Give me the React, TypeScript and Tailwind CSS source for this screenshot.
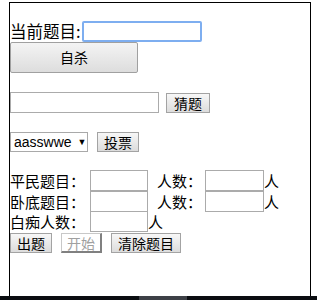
const cjk = { fontFamily: '"SimSun", "Noto Sans CJK SC", sans-serif' };

function Btn({ label, w, disabled }: { label: string; w: string; disabled?: boolean }) {
  return (
    <button
      disabled={disabled}
      className={`${w} h-[20px] border text-[14px] leading-none flex items-center justify-center ${
        disabled
          ? 'bg-white text-[#a0a0a0] border-[#c8c8c8] border-r-[#808080] border-b-[#808080] border-r-2 border-b-2'
          : 'bg-gradient-to-b from-[#f7f7f7] to-[#dcdcdc] text-black border-[#a3a3a3]'
      }`}
      style={cjk}
    >
      {label}
    </button>
  );
}

function Field({ w }: { w: string }) {
  return <input className={`${w} h-[21px] border border-[#ababab] bg-white outline-none`} />;
}

export default function App() {
  return (
    <div className="w-[317px] h-[300px] flex flex-col bg-white overflow-hidden">
      <div className="ml-[9px] mt-[2px] w-[302px] flex-1 border-l border-t border-r border-black text-black" style={cjk}>
        <div className="mt-[18px] flex items-center h-[21px]">
          <span className="w-[72px] text-[16.5px] leading-none whitespace-nowrap">当前题目:</span>
          <input className="w-[120px] h-[21px] border-2 border-[#7eaef0] rounded-[2px] outline-none" />
        </div>
        <button className="w-[128px] h-[31px] border border-[#a0a0a0] bg-gradient-to-b from-[#f4f4f4] to-[#dddddd] text-[14px] rounded-[2px]" style={cjk}>
          自杀
        </button>

        <div className="mt-[19px] flex items-center h-[21px] gap-[7px]">
          <Field w="w-[149px]" />
          <Btn label="猜题" w="w-[44px]" />
        </div>

        <div className="mt-[19px] flex items-center h-[20px] gap-[9px]">
          <div className="w-[78px] h-[20px] border border-[#a9a9a9] flex items-center pl-[3px] text-[14px] leading-none" style={{ fontFamily: '"Liberation Sans", sans-serif' }}>
            <span>aasswwe</span>
            <span className="ml-[6px] text-[9px]">▼</span>
          </div>
          <Btn label="投票" w="w-[42px]" />
        </div>

        <div className="mt-[18px] flex flex-col text-[15px] leading-none">
          <div className="flex items-center h-[21px]">
            <span className="w-[80px] whitespace-nowrap">平民题目：</span>
            <Field w="w-[58px]" />
            <span className="ml-[9px] w-[48px] whitespace-nowrap">人数：</span>
            <Field w="w-[59px]" />
            <span>人</span>
          </div>
          <div className="flex items-center h-[20px]">
            <span className="w-[80px] whitespace-nowrap">卧底题目：</span>
            <Field w="w-[58px]" />
            <span className="ml-[9px] w-[48px] whitespace-nowrap">人数：</span>
            <Field w="w-[59px]" />
            <span>人</span>
          </div>
          <div className="flex items-center h-[21px]">
            <span className="w-[80px] whitespace-nowrap">白痴人数：</span>
            <Field w="w-[58px]" />
            <span>人</span>
          </div>
        </div>

        <div className="mt-[1px] flex items-center gap-[9px]">
          <Btn label="出题" w="w-[42px]" />
          <Btn label="开始" w="w-[41px]" disabled />
          <Btn label="清除题目" w="w-[70px]" />
        </div>
      </div>
      <div className="h-[4px] bg-[#0b0d11] flex">
        <div className="ml-[139px] w-[48px] bg-[#3d4046]" />
      </div>
    </div>
  );
}
